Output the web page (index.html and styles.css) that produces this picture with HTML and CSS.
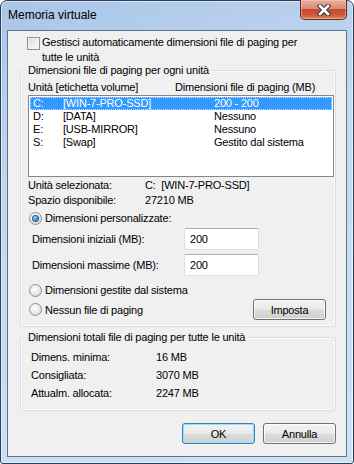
FILE: index.html
```html
<!DOCTYPE html>
<html>
<head>
  <meta charset="UTF-8">
  <title>Memoria virtuale</title>
  <link rel="stylesheet" href="styles.css">
</head>
<body>
  <div class="window">
    <div class="titlebar">
      <span class="title">Memoria virtuale</span>
      <button class="close" title="Chiudi">
        <svg width="18" height="12" viewBox="0 0 18 12">
          <path d="M5 2 L13 10 M13 2 L5 10" stroke="#3d3d3d" stroke-width="4.6" stroke-linecap="square"/>
          <path d="M5 2 L13 10 M13 2 L5 10" stroke="#fff" stroke-width="2.6" stroke-linecap="square"/>
        </svg>
      </button>
    </div>

    <div class="client">
      <!-- auto management -->
      <label class="check-row">
        <span class="checkbox"></span>
        <span class="check-text">Gestisci automaticamente dimensioni file di paging per<br>tutte le unità</span>
      </label>

      <!-- per drive -->
      <div class="group group-drives">
        <div class="group-title">Dimensioni file di paging per ogni unità</div>
        <div class="list-head">
          <span class="head-drive">Unità [etichetta volume]</span>
          <span>Dimensioni file di paging (MB)</span>
        </div>
        <div class="listbox">
          <div class="row selected"><span class="c-letter">C:</span><span class="c-label">[WIN-7-PRO-SSD]</span><span>200 - 200</span></div>
          <div class="row"><span class="c-letter">D:</span><span class="c-label">[DATA]</span><span>Nessuno</span></div>
          <div class="row"><span class="c-letter">E:</span><span class="c-label">[USB-MIRROR]</span><span>Nessuno</span></div>
          <div class="row"><span class="c-letter">S:</span><span class="c-label">[Swap]</span><span>Gestito dal sistema</span></div>
        </div>

        <div class="info">
          <span class="info-label">Unità selezionata:</span><span>C:&nbsp; [WIN-7-PRO-SSD]</span>
          <span class="info-label">Spazio disponibile:</span><span>27210 MB</span>
        </div>

        <label class="radio-row first"><span class="radio checked"></span>Dimensioni personalizzate:</label>
        <div class="size-row">
          <span class="size-label">Dimensioni iniziali (MB):</span>
          <input class="textbox" type="text" value="200">
        </div>
        <div class="size-row second">
          <span class="size-label">Dimensioni massime (MB):</span>
          <input class="textbox" type="text" value="200">
        </div>
        <label class="radio-row system"><span class="radio"></span>Dimensioni gestite dal sistema</label>
        <div class="set-row">
          <label class="radio-row"><span class="radio"></span>Nessun file di paging</label>
          <button class="btn btn-set">Imposta</button>
        </div>
      </div>

      <!-- totals -->
      <div class="group group-totals">
        <div class="group-title">Dimensioni totali file di paging per tutte le unità</div>
        <div class="totals">
          <span>Dimens. minima:</span><span>16 MB</span>
          <span>Consigliata:</span><span>3070 MB</span>
          <span>Attualm. allocata:</span><span>2247 MB</span>
        </div>
      </div>

      <div class="actions">
        <button class="btn default">OK</button>
        <button class="btn">Annulla</button>
      </div>
    </div>
  </div>
</body>
</html>
```

FILE: styles.css
```css
* { box-sizing: border-box; }
body { margin: 0; background: #fff; font-family: "Liberation Sans", Arial, sans-serif; font-size: 11px; letter-spacing: -0.2px; color: #000; }

.window { width: 354px; height: 464px; display: flex; flex-direction: column; padding: 0 6px 6px 6px; border: 1px solid #2c3f57; border-radius: 7px 7px 3px 3px; background: linear-gradient(160deg, #a9c5e8 0%, #c2d8f0 35%, #d0e1f4 100%); box-shadow: inset 0 0 0 1px rgba(255,255,255,0.55); }

.titlebar { height: 29px; flex: none; display: flex; align-items: flex-start; justify-content: space-between; }
.title { font-size: 12px; letter-spacing: 0; padding: 7px 0 0 1px; line-height: 15px; color: #000; }
.close { width: 47px; height: 20px; margin-top: -1px; padding: 0; border: 1px solid #5e2a22; border-top: none; border-radius: 0 0 5px 5px; background: linear-gradient(180deg, #e9ad9f 0%, #dc8a76 45%, #c8462c 50%, #cf5a3f 80%, #e28a62 100%); box-shadow: inset 0 0 0 1px rgba(255,210,200,0.45); display: flex; align-items: center; justify-content: center; }

.client { flex: 1; background: #f0f0f0; border: 1px solid #5d7392; }

.check-row { display: flex; align-items: flex-start; margin: 4px 0 0 19px; line-height: 15px; }
.checkbox { width: 13px; height: 13px; flex: none; margin: 2px 2px 0 0; border: 1px solid #8e8f8f; background: linear-gradient(135deg, #dcdcdc 0%, #eeeeee 60%, #fbfbfb 100%); box-shadow: inset 0 0 0 1px #f4f4f4; }

.group { margin: 5px 10px 0 12px; border: 1px solid #d5dfe5; border-radius: 3px; box-shadow: inset 0 0 0 1px #fbfbfb; }
.group-title { display: table; margin: -8px 0 0 5px; padding: 0 2px; line-height: 14px; background: #f0f0f0; }
.group-drives { padding: 0 0 6px 0; }

.list-head { display: flex; margin: 3px 0 0 7px; line-height: 14px; }
.head-drive { width: 147px; }

.listbox { margin: 1px 0 0 7px; width: 306px; height: 82px; padding: 1px; border: 1px solid #828790; background: #fff; }
.row { display: flex; height: 13px; line-height: 13px; padding-left: 3px; }
.row.selected { background: #3399ff; color: #fff; outline: 1px dotted rgba(255,255,255,0.7); outline-offset: -1px; }
.c-letter { width: 30px; }
.c-label { width: 151px; }

.info { display: grid; grid-template-columns: 117px auto; margin: 1px 0 0 7px; line-height: 15px; }

.radio-row { display: flex; align-items: center; line-height: 16px; margin-left: 8px; }
.radio-row.first { margin-top: 2px; }
.radio-row.system { margin-top: 6px; }
.radio { width: 13px; height: 13px; flex: none; margin-right: 3px; border: 1px solid #8e8f8f; border-radius: 50%; background: radial-gradient(circle at 40% 35%, #ffffff 0%, #ececec 45%, #cfcfcf 100%); display: flex; align-items: center; justify-content: center; }
.radio.checked::after { content: ""; width: 5px; height: 5px; border-radius: 50%; background: radial-gradient(circle at 40% 35%, #9fd8ff 0%, #2b86d8 55%, #104f98 100%); box-shadow: 0 0 0 1px #2f5f8f; }

.size-row { display: flex; align-items: center; height: 22px; margin: 2px 0 0 11px; }
.size-row.second { margin-top: 4px; }
.size-label { width: 152px; }
.textbox { width: 75px; height: 22px; padding: 0 0 0 5px; border: 1px solid #dbdfe6; border-top-color: #abadb3; border-radius: 2px; background: #fff; font: inherit; letter-spacing: inherit; color: #000; }

.set-row { display: flex; align-items: center; justify-content: space-between; height: 21px; margin: 1px 9px 0 0; }
.set-row .radio-row { margin-left: 8px; }

.btn { height: 21px; padding: 0; border: 1px solid #707070; border-radius: 3px; background: linear-gradient(180deg, #f2f2f2 0%, #ebebeb 48%, #dddddd 52%, #cfcfcf 100%); box-shadow: inset 0 0 0 1px rgba(255,255,255,0.75); font: inherit; letter-spacing: inherit; color: #000; }
.btn-set { width: 73px; }
.btn.default { border-color: #3c7fb1; box-shadow: inset 0 0 0 1px #9edcfb; }

.group-totals { margin-top: 10px; padding: 0 0 8px 0; }
.totals { display: grid; grid-template-columns: 125px auto; grid-auto-rows: 18px; align-items: center; margin: 4px 0 0 10px; }

.actions { display: flex; justify-content: flex-end; gap: 8px; margin: 12px 10px 0 0; }
.actions .btn { width: 73px; }
```
